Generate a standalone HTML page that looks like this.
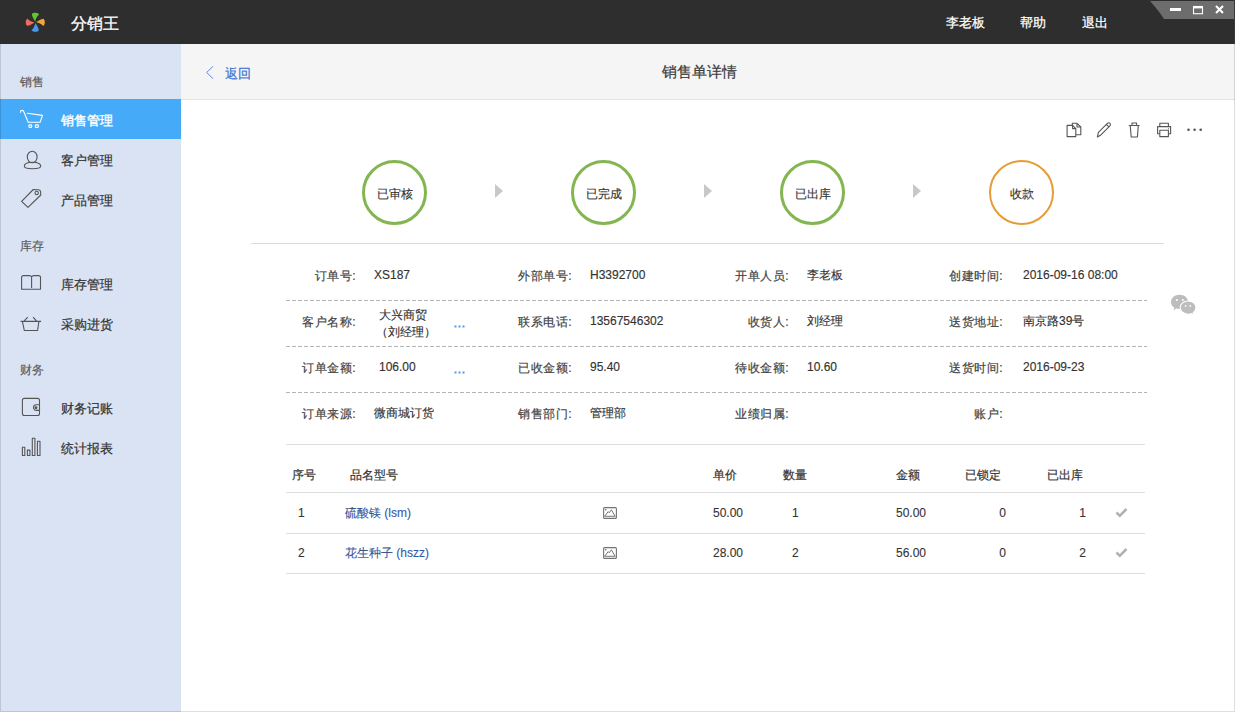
<!DOCTYPE html>
<html><head><meta charset="utf-8">
<style>
*{margin:0;padding:0;box-sizing:border-box}
html,body{width:1235px;height:712px;overflow:hidden;background:#fff;font-family:"Liberation Sans",sans-serif;color:#333}
.abs{position:absolute;white-space:nowrap}
#hdr{position:absolute;left:0;top:0;width:1235px;height:44px;background:#2e2e2e}
#side{position:absolute;left:0;top:44px;width:181px;height:668px;background:#dae3f3}
#sub{position:absolute;left:181px;top:44px;width:1054px;height:56px;background:#f5f5f5;border-bottom:1px solid #e3e3e3}
.t{position:absolute;white-space:nowrap;line-height:1}
.sec{font-size:12px;color:#5a5a5a;margin-top:1px;-webkit-text-stroke:0.15px #5a5a5a}
.nav{font-size:13px;color:#333;margin-top:1px;-webkit-text-stroke:0.2px #333}
.lbl{font-size:12px;color:#444;text-align:right;margin-top:1px;letter-spacing:0.5px;-webkit-text-stroke:0.2px #444}
.val{font-size:12px;color:#333;-webkit-text-stroke:0.15px #333}
.dash{position:absolute;left:286px;width:861px;height:1px;background:repeating-linear-gradient(to right,#b4b4b4 0,#b4b4b4 4px,transparent 4px,transparent 6px)}
.circ{position:absolute;width:65px;height:65px;border-radius:50%;border:3px solid #83b550;font-size:12px;color:#333;display:flex;align-items:center;justify-content:center;padding-top:3px;-webkit-text-stroke:0.15px #333}
.tri{position:absolute;width:0;height:0;border-top:7px solid transparent;border-bottom:7px solid transparent;border-left:8px solid #c8c8c8}
.th{font-size:12px;color:#333;margin-top:1px;-webkit-text-stroke:0.2px #333}
.td{font-size:12px;color:#333;margin-top:1px;-webkit-text-stroke:0.1px #333}
.hl{position:absolute;left:286px;width:859px;height:1px;background:#dedede}
</style></head><body>
<div id="hdr">
  <svg class="abs" style="left:25px;top:12px" width="21" height="21" viewBox="-10.3 -10.3 21 21">
    <path id="pt" d="M-0.1 -0.8 C-1.2 -2.6 -3.2 -5.5 -3.5 -8 C-3 -9.3 -1 -9.6 0.5 -9.5 C2 -9.4 3 -8.8 3.8 -7.9 C2 -6.6 0.5 -4 -0.1 -0.8Z" fill="#64c432"/>
    <path d="M-0.1 -0.8 C-1.2 -2.6 -3.2 -5.5 -3.5 -8 C-3 -9.3 -1 -9.6 0.5 -9.5 C2 -9.4 3 -8.8 3.8 -7.9 C2 -6.6 0.5 -4 -0.1 -0.8Z" fill="#f2a633" transform="rotate(90)"/>
    <path d="M-0.1 -0.8 C-1.2 -2.6 -3.2 -5.5 -3.5 -8 C-3 -9.3 -1 -9.6 0.5 -9.5 C2 -9.4 3 -8.8 3.8 -7.9 C2 -6.6 0.5 -4 -0.1 -0.8Z" fill="#4a98ee" transform="rotate(180)"/>
    <path d="M-0.1 -0.8 C-1.2 -2.6 -3.2 -5.5 -3.5 -8 C-3 -9.3 -1 -9.6 0.5 -9.5 C2 -9.4 3 -8.8 3.8 -7.9 C2 -6.6 0.5 -4 -0.1 -0.8Z" fill="#ee6b5f" transform="rotate(270)"/>
  </svg>
  <div class="t" style="left:71px;top:16px;font-size:16px;color:#fff;-webkit-text-stroke:0.3px #fff">分销王</div>
  <div class="t" style="left:946px;top:16px;font-size:13px;color:#fff;-webkit-text-stroke:0.25px #fff">李老板</div>
  <div class="t" style="left:1020px;top:16px;font-size:13px;color:#fff;-webkit-text-stroke:0.25px #fff">帮助</div>
  <div class="t" style="left:1082px;top:16px;font-size:13px;color:#fff;-webkit-text-stroke:0.25px #fff">退出</div>
  <svg class="abs" style="left:1148px;top:0" width="87" height="20" viewBox="0 0 87 20">
    <path d="M2 1 L86 1 L86 19 L16 19 Q11 11 2 1Z" fill="#6d6d6d"/>
    <rect x="22" y="8" width="11" height="3" fill="#fff"/>
    <rect x="45.5" y="6.5" width="9" height="7.2" fill="none" stroke="#fff" stroke-width="1.1"/>
    <rect x="45" y="6" width="10" height="2.4" fill="#fff"/>
    <path d="M68 6 L75 13 M75 6 L68 13" stroke="#fff" stroke-width="2.1"/>
  </svg>
</div>

<div id="side">
  <div class="t sec" style="left:20px;top:31px">销售</div>
  <div class="abs" style="left:0;top:55px;width:181px;height:40px;background:#45aaf8"></div>
  <div class="t nav" style="left:61px;top:69px;color:#fff;-webkit-text-stroke:0.4px #fff">销售管理</div>
  <div class="t nav" style="left:61px;top:109px">客户管理</div>
  <div class="t nav" style="left:61px;top:149px">产品管理</div>
  <div class="t sec" style="left:20px;top:195px">库存</div>
  <div class="t nav" style="left:61px;top:233px">库存管理</div>
  <div class="t nav" style="left:61px;top:273px">采购进货</div>
  <div class="t sec" style="left:20px;top:319px">财务</div>
  <div class="t nav" style="left:61px;top:357px">财务记账</div>
  <div class="t nav" style="left:61px;top:397px">统计报表</div>
</div>

<div id="sub">
  <svg class="abs" style="left:24px;top:21px" width="9" height="15" viewBox="0 0 9 15"><path d="M8 1.4 L1.6 7.5 L8 13.6" fill="none" stroke="#5b8bd6" stroke-width="1"/></svg>
  <div class="t" style="left:44px;top:23px;font-size:13px;color:#3a72d2;-webkit-text-stroke:0.2px #3a72d2">返回</div>
  <div class="t" style="left:481px;top:20px;font-size:15px;color:#3a3a3a;-webkit-text-stroke:0.2px #3a3a3a">销售单详情</div>
</div>

<!-- status -->
<div class="circ" style="left:362px;top:160px">已审核</div>
<div class="tri" style="left:495px;top:184px"></div>
<div class="circ" style="left:571px;top:160px">已完成</div>
<div class="tri" style="left:704px;top:184px"></div>
<div class="circ" style="left:780px;top:160px">已出库</div>
<div class="tri" style="left:913px;top:184px"></div>
<div class="circ" style="left:989px;top:160px;border:2.6px solid #e69c36">收款</div>
<div class="abs" style="left:251px;top:243px;width:913px;height:1px;background:#dcdcdc"></div>

<!-- info -->
<div class="t lbl" style="right:879px;top:269px">订单号:</div>
<div class="t val" style="left:374px;top:269px">XS187</div>
<div class="t lbl" style="right:663px;top:269px">外部单号:</div>
<div class="t val" style="left:590px;top:269px">H3392700</div>
<div class="t lbl" style="right:446px;top:269px">开单人员:</div>
<div class="t val" style="left:807px;top:269px">李老板</div>
<div class="t lbl" style="right:232px;top:269px">创建时间:</div>
<div class="t val" style="left:1023px;top:269px">2016-09-16 08:00</div>
<div class="t lbl" style="right:879px;top:315px">客户名称:</div>
<div class="t lbl" style="right:663px;top:315px">联系电话:</div>
<div class="t val" style="left:590px;top:315px">13567546302</div>
<div class="t lbl" style="right:446px;top:315px">收货人:</div>
<div class="t val" style="left:807px;top:315px">刘经理</div>
<div class="t lbl" style="right:232px;top:315px">送货地址:</div>
<div class="t val" style="left:1023px;top:315px">南京路39号</div>
<div class="t lbl" style="right:879px;top:361px">订单金额:</div>
<div class="t val" style="left:379px;top:361px">106.00</div>
<div class="t lbl" style="right:663px;top:361px">已收金额:</div>
<div class="t val" style="left:590px;top:361px">95.40</div>
<div class="t lbl" style="right:446px;top:361px">待收金额:</div>
<div class="t val" style="left:807px;top:361px">10.60</div>
<div class="t lbl" style="right:232px;top:361px">送货时间:</div>
<div class="t val" style="left:1023px;top:361px">2016-09-23</div>
<div class="t lbl" style="right:879px;top:407px">订单来源:</div>
<div class="t val" style="left:374px;top:407px">微商城订货</div>
<div class="t lbl" style="right:663px;top:407px">销售部门:</div>
<div class="t val" style="left:590px;top:407px">管理部</div>
<div class="t lbl" style="right:446px;top:407px">业绩归属:</div>
<div class="t lbl" style="right:232px;top:407px">账户:</div>
<div class="t val" style="left:379px;top:309px">大兴商贸</div>
<div class="t val" style="left:376px;top:326px">（刘经理）</div>
<svg class="abs" style="left:454px;top:325px" width="12" height="3"><rect x="0.5" y="0.5" width="2" height="2" fill="#4a9be8"/><rect x="4.5" y="0.5" width="2" height="2" fill="#4a9be8"/><rect x="8.5" y="0.5" width="2" height="2" fill="#4a9be8"/></svg>
<svg class="abs" style="left:454px;top:371px" width="12" height="3"><rect x="0.5" y="0.5" width="2" height="2" fill="#4a9be8"/><rect x="4.5" y="0.5" width="2" height="2" fill="#4a9be8"/><rect x="8.5" y="0.5" width="2" height="2" fill="#4a9be8"/></svg>
<div class="dash" style="top:300px"></div>
<div class="dash" style="top:346px"></div>
<div class="dash" style="top:392px"></div>
<div class="hl" style="top:444px"></div>
<div class="hl" style="top:492px"></div>
<div class="hl" style="top:533px"></div>
<div class="hl" style="top:573px"></div>

<!-- table -->
<div class="t th" style="left:292px;top:468px;">序号</div>
<div class="t th" style="left:350px;top:468px;">品名型号</div>
<div class="t th" style="left:713px;top:468px;">单价</div>
<div class="t th" style="left:783px;top:468px;">数量</div>
<div class="t th" style="left:896px;top:468px;">金额</div>
<div class="t th" style="left:965px;top:468px;">已锁定</div>
<div class="t th" style="left:1047px;top:468px;">已出库</div>
<div class="t td" style="left:298px;top:506px;">1</div>
<div class="t td" style="left:345px;top:506px;color:#2f62c0">硫酸镁 (lsm)</div>
<svg class="abs" style="left:603px;top:507px" width="14" height="12" viewBox="0 0 14 12"><rect x="0.6" y="0.6" width="12.8" height="10.8" rx="1" fill="none" stroke="#727272" stroke-width="1.1"/><path d="M1.6 9.3 L5.2 4.6 L6.3 5.8 L8.4 2.8 L12.2 9.3 Z" fill="none" stroke="#666" stroke-width="0.9" stroke-linejoin="round"/><circle cx="2.8" cy="2.7" r="0.8" fill="#666"/></svg>
<div class="t td" style="left:713px;top:506px;">50.00</div>
<div class="t td" style="left:792px;top:506px;">1</div>
<div class="t td" style="left:896px;top:506px;">50.00</div>
<div class="t td" style="right:229px;top:506px">0</div>
<div class="t td" style="right:149px;top:506px">1</div>
<svg class="abs" style="left:1115px;top:507px" width="13" height="11" viewBox="0 0 13 11"><path d="M1.5 5.5 L4.8 8.8 L11.5 2" fill="none" stroke="#b0b0b0" stroke-width="2.5"/></svg>
<div class="t td" style="left:298px;top:546px;">2</div>
<div class="t td" style="left:345px;top:546px;color:#2f62c0">花生种子 (hszz)</div>
<svg class="abs" style="left:603px;top:547px" width="14" height="12" viewBox="0 0 14 12"><rect x="0.6" y="0.6" width="12.8" height="10.8" rx="1" fill="none" stroke="#727272" stroke-width="1.1"/><path d="M1.6 9.3 L5.2 4.6 L6.3 5.8 L8.4 2.8 L12.2 9.3 Z" fill="none" stroke="#666" stroke-width="0.9" stroke-linejoin="round"/><circle cx="2.8" cy="2.7" r="0.8" fill="#666"/></svg>
<div class="t td" style="left:713px;top:546px;">28.00</div>
<div class="t td" style="left:792px;top:546px;">2</div>
<div class="t td" style="left:896px;top:546px;">56.00</div>
<div class="t td" style="right:229px;top:546px">0</div>
<div class="t td" style="right:149px;top:546px">2</div>
<svg class="abs" style="left:1115px;top:547px" width="13" height="11" viewBox="0 0 13 11"><path d="M1.5 5.5 L4.8 8.8 L11.5 2" fill="none" stroke="#b0b0b0" stroke-width="2.5"/></svg>

<!-- sidebar icons -->
<svg class="abs" style="left:0;top:0" width="181" height="712" viewBox="0 0 181 712">
 <g fill="none" stroke="#fff" stroke-width="1.1" stroke-linejoin="round" stroke-linecap="round">
  <path d="M20.4 112.3 C20.4 110.9 21.4 110.4 22.3 110.4 C23 110.4 23.5 110.9 23.7 111.5 L28.2 122.3 L40.1 122.3 L42.5 115.4 L27.3 113.2"/>
  <rect x="28.9" y="124.9" width="2.8" height="2.5" rx="0.6"/>
  <rect x="35.3" y="124.9" width="3.1" height="2.5" rx="0.6"/>
 </g>
 <g fill="none" stroke="#555" stroke-width="1.1" stroke-linejoin="round">
  <ellipse cx="32.2" cy="157" rx="4.9" ry="5.8"/>
  <path d="M24.3 166.3 C24.3 163.4 27.8 162.2 32.5 162.2 C37.2 162.2 40.7 163.4 40.7 166.3 C40.7 169.6 24.3 169.6 24.3 166.3Z"/>
  <path d="M21.6 201.3 L33.3 189.5 L38.6 189.8 Q40.5 190 40.6 191.9 L40.8 195 L28 207.4Z"/>
  <circle cx="36.7" cy="193" r="1.7"/>
  <path d="M31.6 288 L31.6 276.8 Q31 275.6 29.5 275.6 L23.5 275.6 Q21.8 275.6 21.6 276.8 L21.6 289.2 L40.5 289.2 L40.5 276.8 Q40.3 275.6 38.6 275.6 L33.7 275.6 Q32.2 275.6 31.6 276.8"/>
  <path d="M20.6 321.4 L41.1 321.4 M22.4 321.4 L24.3 330.5 L37.6 330.5 L38.9 321.4 M24 321.2 L27.8 317.2 M36.6 321.2 L33.1 317.2"/>
  <rect x="22.4" y="398.4" width="17.1" height="17.1" rx="2"/>
  <path d="M39.5 404.8 L36.3 404.8 A2.8 2.8 0 0 0 36.3 410.4 L39.5 410.4"/>
  <circle cx="36" cy="407.7" r="0.9" fill="#555"/>
  <rect x="22.4" y="447.3" width="2.4" height="8.2"/>
  <rect x="27.4" y="450.1" width="2.5" height="5.4"/>
  <rect x="32.3" y="438.2" width="2.6" height="17.3"/>
  <rect x="37.4" y="441.2" width="2.6" height="14.3"/>
 </g>
</svg>
<!-- toolbar icons -->
<svg class="abs" style="left:1060px;top:115px" width="150" height="30" viewBox="0 0 150 30">
 <g fill="none" stroke="#555" stroke-width="1.1" stroke-linejoin="round">
  <path d="M12.3 10.3 L12.3 8.3 L17 8.3 L20.8 12 L20.8 19.8 L15.8 19.8"/>
  <path d="M17 8.3 L17 12 L20.8 12"/>
  <path d="M7.1 10.4 L12.6 10.4 L15.8 13.6 L15.8 21.6 L7.1 21.6Z"/>
  <path d="M12.6 10.4 L12.6 13.6 L15.8 13.6"/>
  <path d="M37.4 21.9 L38.4 17.4 L47.4 8.4 Q48.9 7.2 50 8.3 Q51.1 9.4 49.9 10.8 L40.9 19.9Z M37.4 21.9 L40.9 19.9 M46.4 9.4 L48.9 11.9"/>
  <path d="M68.8 10.5 L79.6 10.5 M70.2 10.5 L71.2 22 L77.4 22 L78.3 10.5 M72 10.5 L72 8 L76.5 8 L76.5 10.5"/>
  <path d="M99.8 11.6 L99.8 8.3 L108.4 8.3 L108.4 11.6"/>
  <path d="M99.8 18.7 L97.6 18.7 L97.6 11.6 L110.6 11.6 L110.6 18.7 L108.4 18.7"/>
  <rect x="99.8" y="15.3" width="8.6" height="6.3"/>
 </g>
 <circle cx="108.5" cy="13.8" r="0.6" fill="#555"/>
 <circle cx="128.5" cy="14.8" r="1.3" fill="#555"/>
 <circle cx="134.6" cy="14.8" r="1.3" fill="#555"/>
 <circle cx="140.7" cy="14.8" r="1.3" fill="#555"/>
</svg>
<!-- wechat -->
<svg class="abs" style="left:1160px;top:285px" width="50" height="40" viewBox="0 0 50 40">
 <path d="M19.5 9.8 C24.5 9.8 28.2 13 28.2 17 C28.2 21 24.5 24 19.5 24 C18 24 17 23.8 16 23.5 L13.8 25.3 L14.2 22.6 C12.2 21.3 11 19.3 11 17 C11 13 14.5 9.8 19.5 9.8Z" fill="#bdbdbd"/>
 <path d="M28.1 16 C32.5 16 36 19 36 22.6 C36 24.7 34.9 26.5 33.2 27.7 L33.7 30 L31.3 28.7 C30.3 29 29.2 29.2 28.1 29.2 C23.7 29.2 20.2 26.2 20.2 22.6 C20.2 19 23.7 16 28.1 16Z" fill="#bdbdbd" stroke="#fff" stroke-width="1.1"/>
 <circle cx="16.9" cy="14.9" r="1" fill="#fff"/>
 <circle cx="22.8" cy="14.9" r="1" fill="#fff"/>
 <circle cx="25.6" cy="20.9" r="0.9" fill="#fff"/>
 <circle cx="30.3" cy="20.9" r="0.9" fill="#fff"/>
</svg>
<!-- window border -->
<div class="abs" style="left:1234px;top:0;width:1px;height:44px;background:#3a3a3a"></div>
<div class="abs" style="left:0;top:44px;width:1235px;height:668px;border:1px solid rgba(0,0,0,0.13);border-top:none;pointer-events:none"></div>

</body></html>
